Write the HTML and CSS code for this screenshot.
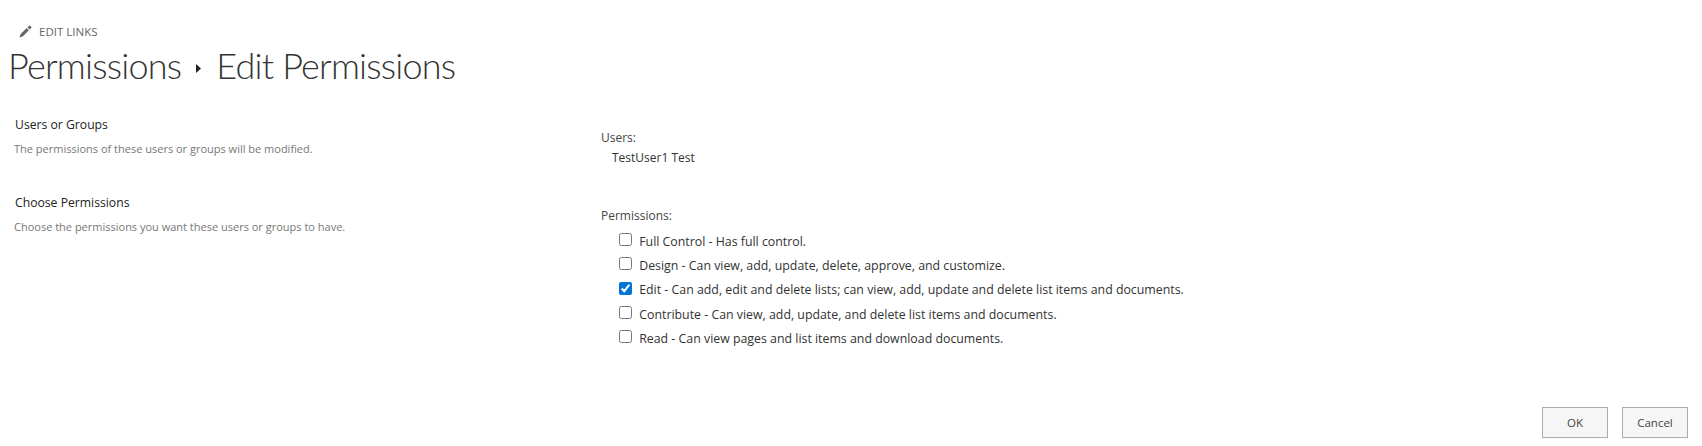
FILE: index.html
```html
<!DOCTYPE html>
<html lang="en">
<head>
  <meta charset="utf-8" />
  <link rel="stylesheet" href="styles.css">
  <title>Edit Permissions</title>
</head>
<body>
  <div class="edit-links">
    <svg class="pencil" width="13" height="13" viewBox="0 0 13 13"><path d="M0.5 12.5l1-3.2 6.2-6.2 2.2 2.2-6.2 6.2z M8.5 2.3l1.6-1.6c.3-.3.6-.3.9 0l1.3 1.3c.3.3.3.6 0 .9l-1.6 1.6z" fill="#666"/></svg>
    <span>EDIT LINKS</span>
  </div>
  <h1 class="title">
    <span>Permissions</span>
    <svg class="crumb" width="5" height="9" viewBox="0 0 5 9"><path d="M0 0l5 4.5-5 4.5z" fill="#222"/></svg>
    <span>Edit Permissions</span>
  </h1>

  <div class="form">
    <div class="section">
      <div class="left">
        <h3>Users or Groups</h3>
        <p>The permissions of these users or groups will be modified.</p>
      </div>
      <div class="right users">
        <div class="field-label">Users:</div>
        <div class="user-name">TestUser1 Test</div>
      </div>
    </div>

    <div class="section">
      <div class="left">
        <h3>Choose Permissions</h3>
        <p>Choose the permissions you want these users or groups to have.</p>
      </div>
      <div class="right perms">
        <div class="field-label">Permissions:</div>
        <label><input type="checkbox"> Full Control - Has full control.</label>
        <label><input type="checkbox"> Design - Can view, add, update, delete, approve, and customize.</label>
        <label><input type="checkbox" checked> Edit - Can add, edit and delete lists; can view, add, update and delete list items and documents.</label>
        <label><input type="checkbox"> Contribute - Can view, add, update, and delete list items and documents.</label>
        <label><input type="checkbox"> Read - Can view pages and list items and download documents.</label>
      </div>
    </div>
  </div>

  <div class="buttons">
    <button>OK</button>
    <button>Cancel</button>
  </div>
</body>
</html>
```

FILE: styles.css
```css
body {
  margin: 0;
  width: 1702px;
  height: 446px;
  overflow: hidden;
  background: white;
  font-family: "Open Sans", "Noto Sans", sans-serif;
  color: #333;
  font-size: 12.35px;
}
.edit-links {
  display: flex;
  align-items: center;
  gap: 7px;
  padding: 23px 0 0 19px;
  height: 16px;
  color: #666;
  font-size: 11.5px;
}
.title {
  margin: 2px 0 0 8px;
  font-family: Lato, sans-serif;
  font-size: 36px;
  letter-spacing: -0.8px;
  line-height: 48px;
  font-weight: 300;
  color: #333;
  display: flex;
  align-items: center;
  gap: 15px;
}
.crumb {
  margin-top: 6px;
}
.form {
  margin-top: 26px;
}
.section {
  display: flex;
  height: 78px;
}
.left {
  width: 601px;
  padding-left: 15px;
  box-sizing: border-box;
}
.left h3 {
  margin: 0;
  font-size: 12.2px;
  line-height: 20px;
  font-weight: 400;
  color: #222;
}
.left p {
  margin: 4px 0 0 -1px;
  font-size: 11px;
  line-height: 20px;
  color: #777;
}
.users {
  padding-top: 13px;
}
.field-label {
  font-size: 12px;
  line-height: 20px;
  color: #444;
}
.user-name {
  padding-left: 11px;
  font-size: 12px;
  line-height: 20px;
}
.perms {
  padding-top: 13px;
}
.perms .field-label {
  margin-bottom: 3px;
}
.perms label {
  display: flex;
  align-items: center;
  height: 24.3px;
  padding-left: 18px;
  white-space: pre;
}
.perms input {
  width: 13px;
  height: 13px;
  margin: 0 4px 3px 0;
  accent-color: #0075d4;
}
.buttons {
  position: absolute;
  right: 14px;
  top: 407px;
  display: flex;
  gap: 14px;
}
button {
  width: 66px;
  height: 31px;
  background: #f6f6f6;
  border: 1px solid #ababab;
  font-family: inherit;
  font-size: 11.5px;
  color: #444;
  padding: 0;
}
```
